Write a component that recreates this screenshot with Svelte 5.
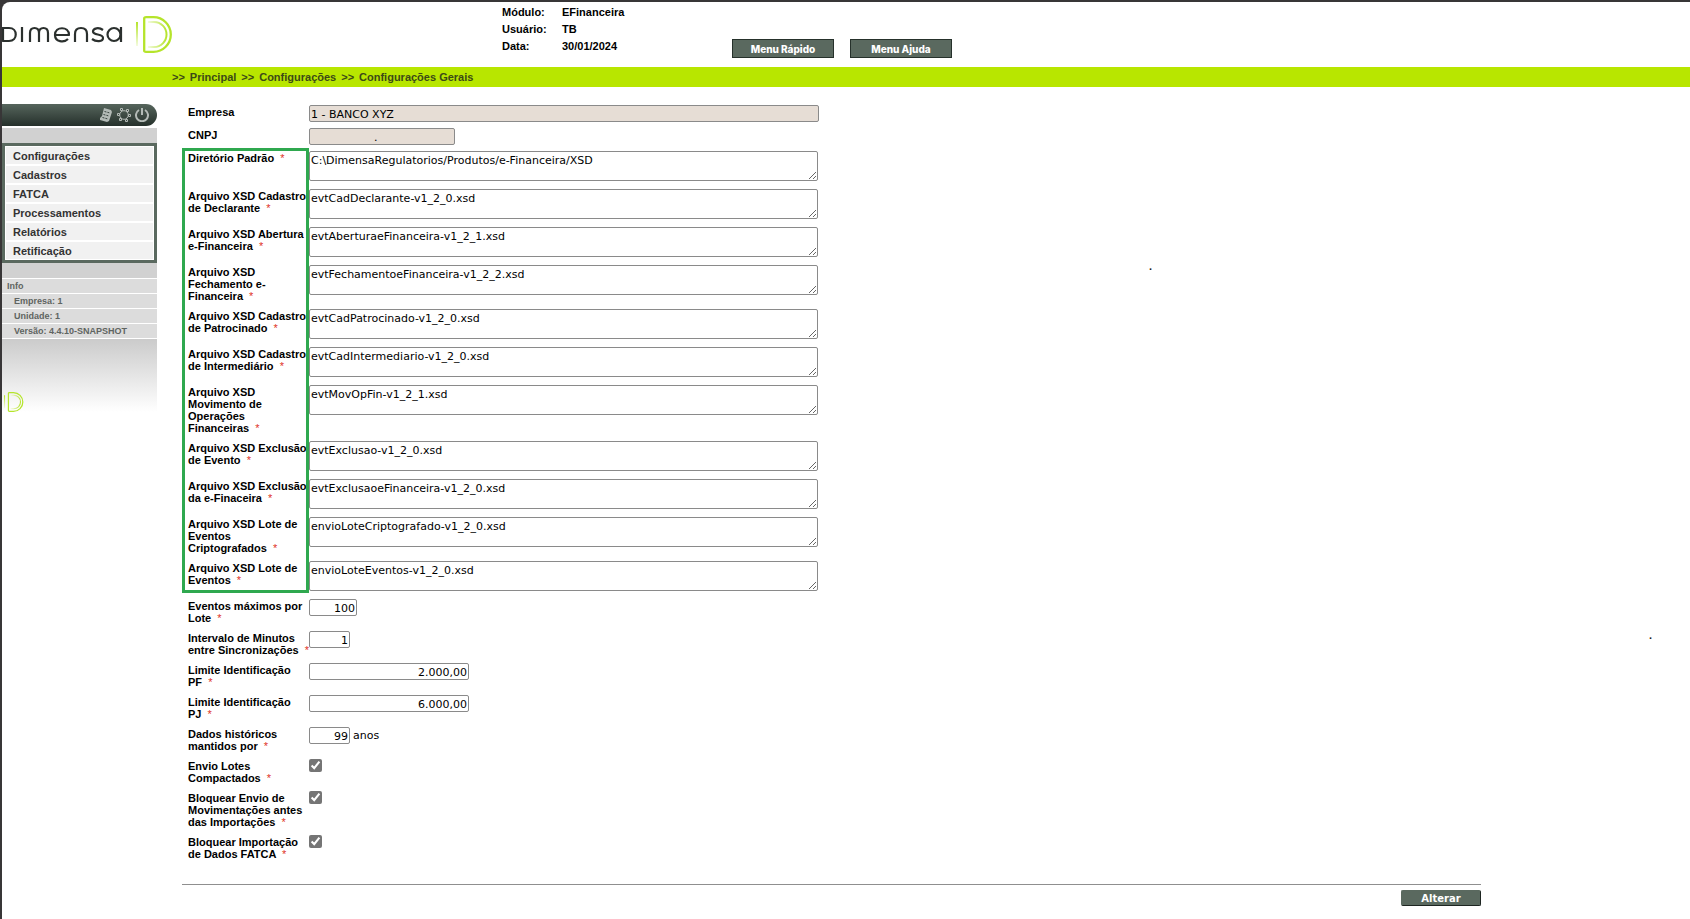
<script lang="ts">
  const modules = [
    { label: 'Módulo:', value: 'EFinanceira' },
    { label: 'Usuário:', value: 'TB' },
    { label: 'Data:', value: '30/01/2024' },
  ];

  const crumbs = ['Principal', 'Configurações', 'Configurações Gerais'];
  const menu = ['Configurações', 'Cadastros', 'FATCA', 'Processamentos', 'Relatórios', 'Retificação'];
  const info = ['Empresa: 1', 'Unidade: 1', 'Versão: 4.4.10-SNAPSHOT'];

  let files = $state([
    { id: 'dir', label: ['Diretório Padrão'], value: 'C:\\DimensaRegulatorios/Produtos/e-Financeira/XSD' },
    { id: 'declarante', label: ['Arquivo XSD Cadastro', 'de Declarante'], value: 'evtCadDeclarante-v1_2_0.xsd' },
    { id: 'abertura', label: ['Arquivo XSD Abertura', 'e-Financeira'], value: 'evtAberturaeFinanceira-v1_2_1.xsd' },
    { id: 'fechamento', label: ['Arquivo XSD', 'Fechamento e-', 'Financeira'], value: 'evtFechamentoeFinanceira-v1_2_2.xsd' },
    { id: 'patrocinado', label: ['Arquivo XSD Cadastro', 'de Patrocinado'], value: 'evtCadPatrocinado-v1_2_0.xsd' },
    { id: 'intermediario', label: ['Arquivo XSD Cadastro', 'de Intermediário'], value: 'evtCadIntermediario-v1_2_0.xsd' },
    { id: 'movimento', label: ['Arquivo XSD', 'Movimento de', 'Operações', 'Financeiras'], value: 'evtMovOpFin-v1_2_1.xsd' },
    { id: 'exclusao', label: ['Arquivo XSD Exclusão', 'de Evento'], value: 'evtExclusao-v1_2_0.xsd' },
    { id: 'exclusao-ef', label: ['Arquivo XSD Exclusão', 'da e-Finaceira'], value: 'evtExclusaoeFinanceira-v1_2_0.xsd' },
    { id: 'lote-cripto', label: ['Arquivo XSD Lote de', 'Eventos', 'Criptografados'], value: 'envioLoteCriptografado-v1_2_0.xsd' },
    { id: 'lote', label: ['Arquivo XSD Lote de', 'Eventos'], value: 'envioLoteEventos-v1_2_0.xsd' },
  ]);

  let limits = $state([
    { id: 'max-eventos', label: ['Eventos máximos por', 'Lote'], value: '100', size: 'medium', suffix: '' },
    { id: 'intervalo', label: ['Intervalo de Minutos', 'entre Sincronizações'], value: '1', size: 'small', suffix: '' },
    { id: 'limite-pf', label: ['Limite Identificação', 'PF'], value: '2.000,00', size: 'large', suffix: '' },
    { id: 'limite-pj', label: ['Limite Identificação', 'PJ'], value: '6.000,00', size: 'large', suffix: '' },
    { id: 'historico', label: ['Dados históricos', 'mantidos por'], value: '99', size: 'small', suffix: 'anos' },
  ]);

  let flags = $state([
    { id: 'compactados', label: ['Envio Lotes', 'Compactados'], checked: true },
    { id: 'bloq-envio', label: ['Bloquear Envio de', 'Movimentações antes', 'das Importações'], checked: true },
    { id: 'bloq-fatca', label: ['Bloquear Importação', 'de Dados FATCA'], checked: true },
  ]);
</script>

{#snippet mark()}
  <path d="M1 6V30" stroke="url(#fade-down)" stroke-width="2" />
  <path d="M8.200 2.200Q8.200 1.200 10 1.200H17.500A17.300 17.300 0 0 1 17.500 35.800H10Q8.200 35.800 8.200 34.800Z" stroke="#b5e42b" stroke-width="2.300" />
  <path d="M12 6H18A12.500 12.500 0 0 1 18 31H12" stroke="url(#fade-right)" stroke-width="2" />
{/snippet}

{#snippet caption(id: string, lines: string[], required: boolean)}
  <label for={id}>
    {#each lines as line, i}
      {#if i > 0}<br />{/if}{line}
    {/each}
    {#if required}<span class="required">*</span>{/if}
  </label>
{/snippet}

<div class="page">
  <header>
    <div class="brand">
      <svg class="wordmark" width="122" height="20" viewBox="0 0 122 20" fill="none" stroke="#2b302e" stroke-width="2.200" stroke-linejoin="round" role="img" aria-label="Dimensa">
        <path d="M0 4H7C16 4 16 17 7 17H1V4" />
        <path d="M20 3V18" />
        <path d="M28 18V9Q28 4 32.500 4T37 9V18M37 9Q37 4 41.500 4T46 9V18" />
        <path d="M53 11H67C67 2 53 2 53 11C53 18 62 19 66 15" />
        <path d="M73 18V10Q73 4 79 4T85 10V18" />
        <path d="M101 6C97 3 91 4 91 7.500C91 12 101 9 101 14C101 18 94 18 90 15" />
        <circle cx="112" cy="10.500" r="6.500" />
        <path d="M119 3V18" />
      </svg>
      <svg width="37" height="37" viewBox="0 0 37 37" fill="none">
        <defs>
          <linearGradient id="fade-down" gradientUnits="userSpaceOnUse" x1="0" y1="6" x2="0" y2="30">
            <stop offset="0" stop-color="#b5e42b" />
            <stop offset="1" stop-color="#f4fbe0" />
          </linearGradient>
          <linearGradient id="fade-right" gradientUnits="userSpaceOnUse" x1="12" y1="0" x2="31" y2="0">
            <stop offset="0" stop-color="#f4fbe0" />
            <stop offset="1" stop-color="#b5e42b" />
          </linearGradient>
        </defs>
        {@render mark()}
      </svg>
    </div>
    <dl>
      {#each modules as item}
        <dt>{item.label}</dt>
        <dd>{item.value}</dd>
      {/each}
    </dl>
    <div class="shortcuts">
      <button type="button">Menu Rápido</button>
      <button type="button">Menu Ajuda</button>
    </div>
  </header>

  <nav class="crumbs">
    {#each crumbs as crumb}
      <span>&gt;&gt;</span><a href="#top">{crumb}</a>
    {/each}
  </nav>

  <div class="body">
    <aside>
      <div class="tools">
        <button type="button" aria-label="Calculadora">
          <svg width="14" height="14" viewBox="0 0 14 14" fill="none">
            <path d="M5 0L12 2L13 4L10 13L8 14L1 12L1 10L3 8Z" fill="#b4bbb7" />
            <path d="M5.500 3.500L11 5M4.500 6.500L10 8M3.500 9.500L9 11" stroke="#38443f" stroke-dasharray="2 1" />
          </svg>
        </button>
        <button type="button" aria-label="Configurar">
          <svg width="14" height="14" viewBox="0 0 14 14" fill="none" stroke="#b4bbb7">
            <circle cx="7" cy="7" r="4.300" />
            <path d="M3.500 .5h2v2h-2zM9.500 1.500h2v2h-2zM.5 5.500h2v2h-2zM11.500 6.500h2v2h-2zM2.500 10.500h2v2h-2zM8.500 11.500h2v2h-2z" fill="#38443f" />
          </svg>
        </button>
        <button type="button" aria-label="Sair">
          <svg width="14" height="14" viewBox="0 0 14 14" fill="none" stroke="#b4bbb7" stroke-width="2">
            <path d="M4 2A6 6 0 1 0 10 2M7 0V7" />
          </svg>
        </button>
      </div>
      <div class="panel">
        <nav class="menu">
          {#each menu as item}
            <a href="#top">{item}</a>
          {/each}
        </nav>
        <ul class="info">
          <li class="title">Info</li>
          {#each info as line}
            <li>{line}</li>
          {/each}
        </ul>
        <div class="fade">
          <svg width="20" height="20" viewBox="0 0 37 37" fill="none">{@render mark()}</svg>
        </div>
      </div>
    </aside>

    <main>
      <form onsubmit={(e) => e.preventDefault()}>
        <div class="row single">
          {@render caption('empresa', ['Empresa'], false)}
          <input id="empresa" class="full" value="1 - BANCO XYZ" readonly />
        </div>
        <div class="row single">
          {@render caption('cnpj', ['CNPJ'], false)}
          <input id="cnpj" class="cnpj" value="." readonly />
        </div>

        <div class="files">
          {#each files as field}
            <div class="row">
              {@render caption(field.id, field.label, true)}
              <textarea id={field.id} rows="2" spellcheck="false" bind:value={field.value}></textarea>
            </div>
          {/each}
          <div class="highlight"></div>
        </div>

        {#each limits as field}
          <div class="row">
            {@render caption(field.id, field.label, true)}
            <div class="control">
              <input id={field.id} class="number {field.size}" bind:value={field.value} />
              {#if field.suffix}<span>{field.suffix}</span>{/if}
            </div>
          </div>
        {/each}

        {#each flags as field}
          <div class="row">
            {@render caption(field.id, field.label, true)}
            <input id={field.id} type="checkbox" bind:checked={field.checked} />
          </div>
        {/each}

        <div class="actions">
          <button type="submit">Alterar</button>
        </div>
      </form>
    </main>
  </div>

  <span class="speck upper">.</span>
  <span class="speck lower">.</span>
</div>

<style>
  :global(body) {
    background: #383637;
  }

  .page {
    position: relative;
    box-sizing: border-box;
    min-height: calc(100vh - 2px);
    margin: 2px 0 0 2px;
    border-top-left-radius: 8px;
    background: #fff;
    color: #000;
    font: bold 11px/12px "Liberation Sans", Arial, sans-serif;
    overflow: hidden;
  }

  header {
    display: flex;
    height: 65px;
  }

  .brand {
    display: flex;
    flex: 0 0 500px;
    align-items: flex-start;
    gap: 12px;
    padding-top: 14px;
    box-sizing: border-box;
  }

  .wordmark {
    margin-top: 8px;
  }

  dl {
    display: grid;
    grid-template-columns: 60px 170px;
    grid-auto-rows: 17px;
    margin: 2px 0 0;
    line-height: 17px;
  }

  dd {
    margin: 0;
  }

  .shortcuts {
    display: flex;
    gap: 16px;
    align-items: flex-start;
    padding-top: 37px;
  }

  button {
    padding: 0;
    background: #5a695f;
    color: #fff;
    cursor: pointer;
  }

  .shortcuts button {
    width: 102px;
    height: 19px;
    border: 1px solid #26312b;
    font: 800 10px Inter, Arial, sans-serif;
  }

  .crumbs {
    display: flex;
    gap: 5px;
    padding-left: 170px;
    background: #b8e600;
    color: #3c4a17;
    line-height: 20px;
  }

  .crumbs a {
    color: inherit;
    text-decoration: none;
  }

  .body {
    display: flex;
    gap: 25px;
    padding-top: 17px;
  }

  aside {
    flex: 0 0 155px;
  }

  .tools {
    display: flex;
    justify-content: flex-end;
    align-items: center;
    gap: 4px;
    height: 22px;
    padding-right: 8px;
    border-radius: 0 11px 11px 0;
    background: linear-gradient(#56655c, #25302b);
  }

  .tools button {
    display: flex;
    border: 0;
    background: none;
  }

  .panel {
    margin-top: 2px;
    padding-top: 15px;
    background: #d1d1d1;
  }

  .menu {
    padding: 0 1px;
    border: 3px solid #5a695f;
    background: #fff;
  }

  .menu a {
    display: block;
    height: 17px;
    padding-left: 7px;
    border: solid #fff;
    border-width: 1px 0;
    background: #f1f1f1;
    color: #333;
    line-height: 18px;
    text-decoration: none;
  }

  .info {
    margin: 15px 0 0;
    padding: 0;
    list-style: none;
    color: #5f6461;
    font-size: 9px;
  }

  .info li {
    height: 14px;
    padding-left: 12px;
    border-top: 1px solid #fff;
    background: #dcdcdc;
    line-height: 14px;
  }

  .info .title {
    padding-left: 5px;
  }

  .fade {
    box-sizing: border-box;
    height: 74px;
    padding: 53px 0 0 2px;
    border-top: 1px solid #fff;
    background: linear-gradient(#cbcbcb, #fff);
  }

  main {
    flex: 1;
    padding-right: 209px;
  }

  form {
    padding-top: 1px;
  }

  .row {
    display: grid;
    grid-template-columns: 121px 1fr;
    align-items: start;
    padding: 0 0 7px 6px;
  }

  .row label {
    padding-top: 1px;
    white-space: nowrap;
  }

  .required {
    margin-left: 3px;
    color: #e0331f;
    font-weight: normal;
  }

  .single {
    padding-bottom: 6px;
  }

  input,
  textarea,
  .control {
    margin: 0;
    font: 11px/13px "DejaVu Sans", Verdana, sans-serif;
  }

  input:not([type='checkbox']),
  textarea {
    box-sizing: border-box;
    padding: 2px 1px 0;
    border: 1px solid #8a8a8a;
    border-radius: 2px;
    background: #fff;
    color: #000;
  }

  input:not([type='checkbox']) {
    height: 17px;
  }

  input:read-only:not([type='checkbox']) {
    background: #e6ddd5;
  }

  .full {
    width: 510px;
  }

  .row input.cnpj {
    width: 146px;
    padding-left: 64px;
  }

  textarea {
    width: 509px;
    height: 30px;
    margin-bottom: 1px;
    overflow: hidden;
  }

  .control {
    display: flex;
    align-items: center;
    gap: 3px;
  }

  .number {
    text-align: right;
  }

  .small {
    width: 41px;
  }

  .medium {
    width: 48px;
  }

  .large {
    width: 160px;
  }

  .files {
    position: relative;
  }

  .highlight {
    position: absolute;
    inset: -3px auto 6px 0;
    width: 127px;
    box-sizing: border-box;
    border: 3px solid #2fa84f;
    pointer-events: none;
  }

  input[type='checkbox'] {
    width: 13px;
    height: 13px;
    accent-color: #757575;
  }

  .actions {
    display: flex;
    justify-content: flex-end;
    margin-top: 17px;
    padding-top: 5px;
    border-top: 1px solid #8f8f8f;
  }

  .actions button {
    width: 80px;
    height: 16px;
    border: 1px solid #5a695f;
    border-right-color: #1d2521;
    border-bottom-color: #1d2521;
    border-radius: 2px;
    font: bold 10px "DejaVu Sans", Verdana, sans-serif;
  }

  .speck {
    position: absolute;
    color: #222;
  }

  .upper {
    top: 258px;
    right: 538px;
  }

  .lower {
    top: 627px;
    right: 38px;
  }
</style>
